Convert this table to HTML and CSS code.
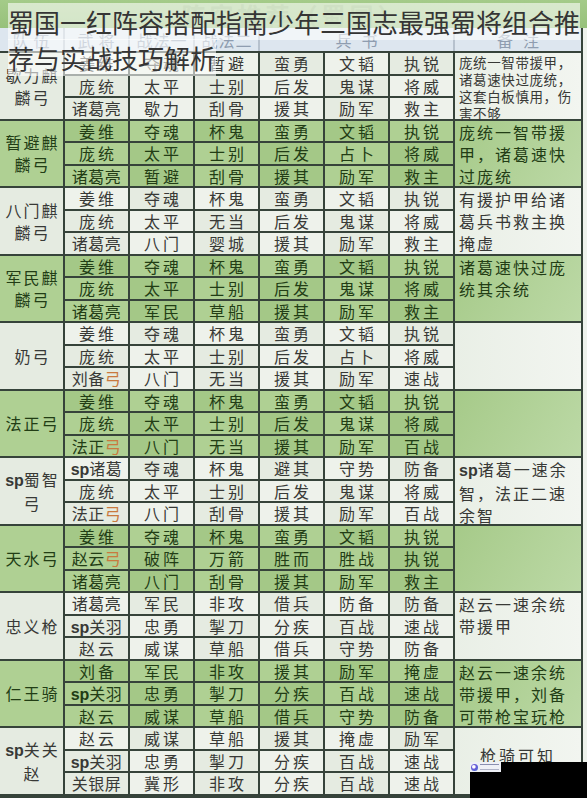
FILE: index.html
```html
<!DOCTYPE html>
<html lang="zh-CN">
<head>
<meta charset="utf-8">
<title>蜀国阵容推荐</title>
<link rel="stylesheet" href="styles.css">
</head>
<body>
<div class="sheet">
  <div class="banner">阵容推荐（蜀国）</div>
  <div class="grid">
    <div class="h">队伍</div>
    <div class="h">武将</div>
    <div class="h t3h">战法一</div>
    <div class="h t3h">战法二</div>
    <div class="h span3">兵书</div>
    <div class="h last">备注</div>

    <div class="grp w">
      <div class="c team"><span class="tn">歇力麒麟弓</span></div>
      <div class="c">姜维</div><div class="c">夺魂</div><div class="c">暂避</div><div class="c">蛮勇</div><div class="c">文韬</div><div class="c">执锐</div>
      <div class="c note small">庞统一智带援甲，诸葛速快过庞统，这套白板慎用，伤害不够</div>
      <div class="c">庞统</div><div class="c">太平</div><div class="c">士别</div><div class="c">后发</div><div class="c">鬼谋</div><div class="c">将威</div>
      <div class="c t3">诸葛亮</div><div class="c">歇力</div><div class="c">刮骨</div><div class="c">援其</div><div class="c">励军</div><div class="c">救主</div>
    </div>

    <div class="grp g">
      <div class="c team"><span class="tn">暂避麒麟弓</span></div>
      <div class="c">姜维</div><div class="c">夺魂</div><div class="c">杯鬼</div><div class="c">蛮勇</div><div class="c">文韬</div><div class="c">执锐</div>
      <div class="c note">庞统一智带援甲，诸葛速快过庞统</div>
      <div class="c">庞统</div><div class="c">太平</div><div class="c">士别</div><div class="c">后发</div><div class="c">占卜</div><div class="c">将威</div>
      <div class="c t3">诸葛亮</div><div class="c">暂避</div><div class="c">刮骨</div><div class="c">援其</div><div class="c">励军</div><div class="c">救主</div>
    </div>

    <div class="grp w">
      <div class="c team"><span class="tn">八门麒麟弓</span></div>
      <div class="c">姜维</div><div class="c">夺魂</div><div class="c">杯鬼</div><div class="c">蛮勇</div><div class="c">文韬</div><div class="c">执锐</div>
      <div class="c note">有援护甲给诸葛兵书救主换掩虚</div>
      <div class="c">庞统</div><div class="c">太平</div><div class="c">无当</div><div class="c">后发</div><div class="c">鬼谋</div><div class="c">将威</div>
      <div class="c t3">诸葛亮</div><div class="c">八门</div><div class="c">婴城</div><div class="c">援其</div><div class="c">励军</div><div class="c">救主</div>
    </div>

    <div class="grp g">
      <div class="c team"><span class="tn">军民麒麟弓</span></div>
      <div class="c">姜维</div><div class="c">夺魂</div><div class="c">杯鬼</div><div class="c">蛮勇</div><div class="c">文韬</div><div class="c">执锐</div>
      <div class="c note">诸葛速快过庞统其余统</div>
      <div class="c">庞统</div><div class="c">太平</div><div class="c">士别</div><div class="c">后发</div><div class="c">鬼谋</div><div class="c">将威</div>
      <div class="c t3">诸葛亮</div><div class="c">军民</div><div class="c">草船</div><div class="c">援其</div><div class="c">励军</div><div class="c">救主</div>
    </div>

    <div class="grp w">
      <div class="c team"><span class="tn">奶弓</span></div>
      <div class="c">姜维</div><div class="c">夺魂</div><div class="c">杯鬼</div><div class="c">蛮勇</div><div class="c">文韬</div><div class="c">执锐</div>
      <div class="c note"></div>
      <div class="c">庞统</div><div class="c">太平</div><div class="c">士别</div><div class="c">后发</div><div class="c">占卜</div><div class="c">将威</div>
      <div class="c t3"><span>刘备<span class="hl">弓</span></span></div><div class="c">八门</div><div class="c">无当</div><div class="c">援其</div><div class="c">励军</div><div class="c">速战</div>
    </div>

    <div class="grp g">
      <div class="c team"><span class="tn">法正弓</span></div>
      <div class="c">姜维</div><div class="c">夺魂</div><div class="c">杯鬼</div><div class="c">蛮勇</div><div class="c">文韬</div><div class="c">执锐</div>
      <div class="c note"></div>
      <div class="c">庞统</div><div class="c">太平</div><div class="c">士别</div><div class="c">后发</div><div class="c">鬼谋</div><div class="c">将威</div>
      <div class="c t3"><span>法正<span class="hl">弓</span></span></div><div class="c">八门</div><div class="c">无当</div><div class="c">援其</div><div class="c">励军</div><div class="c">百战</div>
    </div>

    <div class="grp w">
      <div class="c team"><span class="tn"><span class="sp">sp</span>蜀智弓</span></div>
      <div class="c t3"><span><span class="sp">sp</span>诸葛</span></div><div class="c">夺魂</div><div class="c">杯鬼</div><div class="c">避其</div><div class="c">守势</div><div class="c">防备</div>
      <div class="c note"><span class="sp">sp</span>诸葛一速余智，法正二速余智</div>
      <div class="c">庞统</div><div class="c">太平</div><div class="c">士别</div><div class="c">后发</div><div class="c">鬼谋</div><div class="c">将威</div>
      <div class="c t3"><span>法正<span class="hl">弓</span></span></div><div class="c">八门</div><div class="c">刮骨</div><div class="c">援其</div><div class="c">励军</div><div class="c">百战</div>
    </div>

    <div class="grp g">
      <div class="c team"><span class="tn">天水弓</span></div>
      <div class="c">姜维</div><div class="c">夺魂</div><div class="c">杯鬼</div><div class="c">蛮勇</div><div class="c">文韬</div><div class="c">执锐</div>
      <div class="c note"></div>
      <div class="c t3"><span>赵云<span class="hl">弓</span></span></div><div class="c">破阵</div><div class="c">万箭</div><div class="c">胜而</div><div class="c">胜战</div><div class="c">执锐</div>
      <div class="c t3">诸葛亮</div><div class="c">八门</div><div class="c">刮骨</div><div class="c">援其</div><div class="c">励军</div><div class="c">救主</div>
    </div>

    <div class="grp w">
      <div class="c team"><span class="tn">忠义枪</span></div>
      <div class="c t3">诸葛亮</div><div class="c">军民</div><div class="c">非攻</div><div class="c">借兵</div><div class="c">防备</div><div class="c">防备</div>
      <div class="c note">赵云一速余统带援甲</div>
      <div class="c t3"><span><span class="sp">sp</span>关羽</span></div><div class="c">忠勇</div><div class="c">掣刀</div><div class="c">分疾</div><div class="c">百战</div><div class="c">速战</div>
      <div class="c">赵云</div><div class="c">威谋</div><div class="c">草船</div><div class="c">借兵</div><div class="c">守势</div><div class="c">防备</div>
    </div>

    <div class="grp g">
      <div class="c team"><span class="tn">仁王骑</span></div>
      <div class="c">刘备</div><div class="c">军民</div><div class="c">非攻</div><div class="c">援其</div><div class="c">励军</div><div class="c">掩虚</div>
      <div class="c note">赵云一速余统带援甲，刘备可带枪宝玩枪</div>
      <div class="c t3"><span><span class="sp">sp</span>关羽</span></div><div class="c">忠勇</div><div class="c">掣刀</div><div class="c">分疾</div><div class="c">百战</div><div class="c">速战</div>
      <div class="c">赵云</div><div class="c">威谋</div><div class="c">草船</div><div class="c">借兵</div><div class="c">守势</div><div class="c">防备</div>
    </div>

    <div class="grp w">
      <div class="c team"><span class="tn"><span class="sp">sp</span>关关赵</span></div>
      <div class="c">赵云</div><div class="c">威谋</div><div class="c">草船</div><div class="c">援其</div><div class="c">掩虚</div><div class="c">励军</div>
      <div class="c note mid">枪骑可知</div>
      <div class="c t3"><span><span class="sp">sp</span>关羽</span></div><div class="c">忠勇</div><div class="c">掣刀</div><div class="c">分疾</div><div class="c">百战</div><div class="c">速战</div>
      <div class="c t3">关银屏</div><div class="c">冀形</div><div class="c">非攻</div><div class="c">分疾</div><div class="c">百战</div><div class="c">速战</div>
    </div>
  </div>

  <div class="cover">
    <div class="logo"><span class="logo-dot"></span><span class="logo-lines"></span></div>
  </div>
</div>

<div class="overlay"><span class="title">蜀国一红阵容搭配指南少年三国志最强蜀将组合推荐与实战技巧解析</span></div>
</body>
</html>
```

FILE: styles.css
```css
html, body {
  margin: 0;
  padding: 0;
  background: #ffffff;
}

body {
  font-family: "Noto Sans CJK SC", "Noto Sans", sans-serif;
}

.sheet {
  position: relative;
  width: 587px;
  height: 798px;
  overflow: hidden;
  background: #eef2ec;
}

.banner {
  height: 28px;
  background: linear-gradient(#a4cb89, #97c17b);
  color: #8db672;
  font-size: 24px;
  font-weight: 700;
  line-height: 30px;
  text-align: center;
  letter-spacing: 4px;
}

.grid {
  display: grid;
  grid-template-columns: repeat(7, 63px) 126px;
  grid-template-rows: 23px repeat(33, 20.5px);
  gap: 2px;
  width: 581px;
  padding: 0 2px 5px 0;
  background: #36433a;
}

.h {
  display: flex;
  align-items: center;
  justify-content: center;
  margin-right: -2px;
  border-right: 2px solid #b6c1cd;
  background: #dde6ef;
  color: #8f9db0;
  font-size: 16px;
  letter-spacing: 5px;
  padding-left: 4px;
}

.h.t3h {
  letter-spacing: 1px;
  padding-left: 1px;
}

.h.span3 {
  grid-column: span 3;
  letter-spacing: 10px;
  padding-left: 10px;
}

.h.last {
  margin-right: 0;
  border-right: 0;
  letter-spacing: 10px;
  padding-left: 10px;
}

.grp {
  display: contents;
}

.c {
  display: flex;
  align-items: center;
  justify-content: center;
  font-size: 16px;
  letter-spacing: 3px;
  padding-left: 3px;
  white-space: nowrap;
}

.c.t3 {
  letter-spacing: 0.5px;
  padding-left: 0;
}

.team {
  grid-row: span 3;
  padding: 0 0 0 2px;
}

.tn {
  display: block;
  width: 58px;
  white-space: normal;
  text-align: center;
  line-height: 22px;
  letter-spacing: 2px;
}

.note {
  grid-row: span 3;
  display: block;
  white-space: normal;
  text-align: left;
  line-height: 22px;
  letter-spacing: 2px;
  padding: 0 4px 0 4px;
}

.note.small {
  font-size: 13.5px;
  line-height: 17px;
  letter-spacing: 0.6px;
  padding-top: 1px;
  color: #6a6f68;
}

.note.mid {
  text-align: center;
  padding-top: 16px;
  letter-spacing: 3px;
}

.sp {
  font-family: "Liberation Sans", "Noto Sans", sans-serif;
  font-weight: 700;
  letter-spacing: 0;
  font-size: 16px;
}

.hl {
  color: #c97a3e;
}

/* white groups */
.w > .c {
  background: #eef2eb;
  color: #383936;
}

.w > .c:nth-child(odd) {
  background: #e5ebe1;
}

.w > .team {
  background: linear-gradient(#f1f4ef, #e7ede4);
}

.w > .note {
  background: linear-gradient(90deg, #e9efe6, #f2f5f0);
}

/* green groups */
.g > .c {
  background: #a4c887;
  color: #223d15;
}

.g > .c:nth-child(odd) {
  background: #afd093;
}

.g > .team {
  background: linear-gradient(#b3d39a, #a4c887);
}

.g > .note {
  background: linear-gradient(120deg, #a6ca89, #bcd9a6);
  color: #223d15;
}

/* watermark cover at the bottom right */
.cover {
  position: absolute;
  left: 470px;
  top: 762px;
  width: 117px;
  height: 36px;
  background: #000000;
}

.logo {
  position: absolute;
  left: 0;
  top: 0;
  width: 31px;
  height: 10px;
  background: #eef0f6;
  display: flex;
  align-items: center;
  gap: 2px;
  padding-left: 1px;
  box-sizing: border-box;
}

.logo-dot {
  width: 7px;
  height: 7px;
  border-radius: 50%;
  background: radial-gradient(circle at 40% 40%, #ffffff 0 20%, #6a5bd8 40%, #3a6fd1 100%);
}

.logo-lines {
  width: 19px;
  height: 4px;
  border-top: 1px solid #8a8fb0;
  border-bottom: 1px solid #b0b3c8;
}

/* title overlay on top of the picture */
.overlay {
  position: absolute;
  left: 0;
  top: 0;
  width: 587px;
  box-sizing: border-box;
  padding: 4px 0 0 8px;
  font-family: "Noto Sans CJK SC", sans-serif;
  font-size: 26px;
  line-height: 36px;
  color: #353535;
}

.title {
  background: rgba(255, 255, 255, 0.58);
  -webkit-box-decoration-break: clone;
  box-decoration-break: clone;
}
```
